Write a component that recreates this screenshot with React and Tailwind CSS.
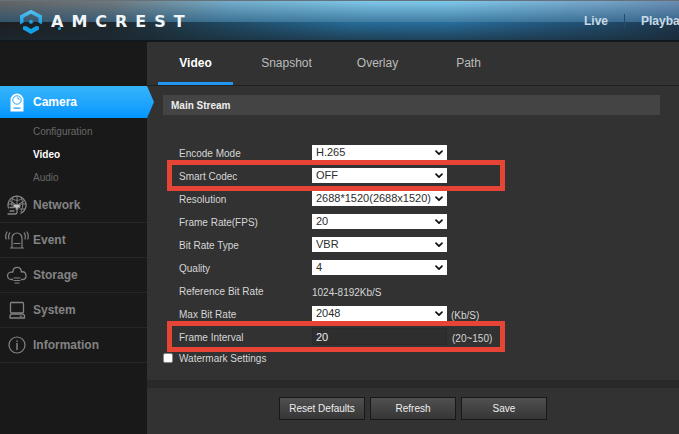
import React from "react";

const stroke = {
  fill: "none",
  stroke: "currentColor",
  strokeLinecap: "round",
  strokeLinejoin: "round",
};

function LogoMark() {
  return (
    <svg width="24" height="26" viewBox="0 0 24 26" aria-hidden="true">
      <defs>
        <linearGradient id="mark" x1="0" y1="0" x2="0" y2="1">
          <stop offset="0" stopColor="#5cc0ee" />
          <stop offset="1" stopColor="#12a0e6" />
        </linearGradient>
      </defs>
      <path d="M1 15.500V6.500L12 0.800L23 6.500V15.500L19.500 13.500V8.700L12 4.800L4.500 8.700V13.500Z" fill="url(#mark)" />
      <path d="M4 17.500L7 17L12 20L17 17L20 17.500V20.500L12 25L4 20.500Z" fill="#12a0e6" />
      <circle cx="12" cy="12.800" r="2" fill="#1ea6e8" />
    </svg>
  );
}

function CameraIcon() {
  return (
    <svg width="14" height="19" viewBox="0 0 14 19" aria-hidden="true">
      <path d="M0.500 18.500V7a6.500 6.500 0 0 1 13 0V18.500Z" fill="#fff" />
      <circle cx="7" cy="7" r="4.200" fill="none" stroke="#2aa9f8" strokeWidth="1" />
      <path d="M7 4.800a2.200 2.200 0 0 1 2.200 2.200" fill="none" stroke="#2aa9f8" strokeWidth="1" />
      <path d="M3.500 15.200h7" stroke="#1ba1fb" strokeWidth="1.200" />
    </svg>
  );
}

function NetworkIcon() {
  return (
    <svg width="20" height="20" viewBox="0 0 20 20" aria-hidden="true" {...stroke}>
      <path d="M1.500 13A9 9 0 1 1 14 18.200" strokeWidth="1.300" />
      <path d="M5 3.500C7 6 13 6 15.500 3.500M1.500 9h5M13 9h6M10 1v8M6 2.500C4.500 6 4.500 8 5 11M14 2.500c2.500 4 2.500 9 0 14M3 6l5 3M17 6l-5 3M13 14h5" />
      <path d="M7 9.500h6v3h-2v2H9v-2H7Z" fill="#c4c4c4" />
      <path d="M10 14v3c0 1.500-1 2-2 2H1M3 12.500h4M3 16h4" strokeWidth="1.300" />
    </svg>
  );
}

function EventIcon() {
  return (
    <svg width="24" height="18" viewBox="0 0 24 18" aria-hidden="true" {...stroke}>
      <path d="M7 16.500V7a5 5 0 0 1 10 0V16.500M5.500 17h13M9 12.500h6" strokeWidth="1.200" />
      <path d="M4.800 2Q3 4 4 8M2 1Q0 4 1.200 8M19.200 2Q21 4 20 8M22 1Q24 4 22.800 8" strokeWidth="1.200" />
    </svg>
  );
}

function StorageIcon() {
  return (
    <svg width="20" height="18" viewBox="0 0 20 18" aria-hidden="true" {...stroke}>
      <path d="M5.500 13.500H4.500a3.700 3.700 0 0 1-.5-7.400C6 6 6 6.500 6 5a4.200 4.200 0 0 1 8.300 0v1c3-1 4.700 1 4.700 3.700S17.500 13.500 15.500 13.500h-1" strokeWidth="1.300" />
      <path d="M7 12h6M7 14.500h6M8 17h4" strokeWidth="1.200" />
    </svg>
  );
}

function SystemIcon() {
  return (
    <svg width="18" height="18" viewBox="0 0 18 18" aria-hidden="true" {...stroke}>
      <rect x="2.500" y="1.500" width="13" height="10.500" rx="1" strokeWidth="1.300" />
      <path d="M3 13.200h12l1.500 1v2.800h-14.500V14.200Z" strokeWidth="1.300" />
      <path d="M12 15.200h2" />
    </svg>
  );
}

function InformationIcon() {
  return (
    <svg width="18" height="18" viewBox="0 0 18 18" aria-hidden="true" {...stroke}>
      <circle cx="9" cy="9" r="8" strokeWidth="1.200" />
      <path d="M9 7.500v6M9 5v0.200" strokeWidth="1.500" />
    </svg>
  );
}

const sections = [
  { name: "Network", icon: NetworkIcon },
  { name: "Event", icon: EventIcon },
  { name: "Storage", icon: StorageIcon },
  { name: "System", icon: SystemIcon },
  { name: "Information", icon: InformationIcon },
];

function Header() {
  return (
    <header className="relative flex h-[42px] shrink-0 items-center overflow-hidden border-t border-b-2 border-t-[#66727a] border-b-[#11181d] bg-[linear-gradient(to_right,#1d1f21_0px,#1f262b_110px,#204a64_230px,#266c99_350px,#286f9f_450px,#204d6e_600px,#1d354b_679px)]">
      <div className="absolute inset-x-0 top-0 h-[21px] bg-[linear-gradient(to_right,#646464_0px,#71787c_110px,#76aecb_230px,#80c8ea_370px,#80c9ec_450px,#76a5c8_600px,#6b8db1_679px)]" />
      <div className="absolute inset-x-0 top-0 h-[21px] bg-linear-to-b from-transparent to-[#144a70]/60" />
      <div className="absolute inset-x-0 bottom-0 h-[18px] bg-linear-to-b from-transparent to-[#1b2933]/65" />
      <div className="relative flex items-center gap-2 pt-[3px] pl-[19px]">
        <LogoMark />
        <span className="relative font-['DejaVu_Sans',sans-serif] text-base font-bold tracking-[8px] text-[#f2f6f8]">
          AMCREST
          <span className="absolute bottom-1 left-[7px] size-[3px] rounded-full bg-[#1ea6e8]" />
        </span>
      </div>
      <nav className="absolute left-[584px] flex items-center text-xs font-bold text-[#c9d9e6]">
        <a href="#live">Live</a>
        <span className="ml-4 h-[14px] w-px bg-[#244b68]" />
        <a href="#playback" className="ml-4">Playback</a>
      </nav>
    </header>
  );
}

function Sidebar() {
  return (
    <aside className="w-[147px] shrink-0 bg-[#191919] pt-[44px] font-bold text-[#838383]">
      <a href="#camera" className="relative flex h-8 w-[154px] items-center bg-linear-to-b from-[#35b5fa] to-[#0096ff] text-xs text-white [clip-path:polygon(0_0,147px_0,100%_50%,147px_100%,0_100%)]">
        <span className="flex w-[33px] justify-center"><CameraIcon /></span>
        Camera
      </a>
      <ul className="h-[70px] pt-[2px] pl-[33px] text-[10px] leading-[23px]">
        <li><a href="#configuration" className="font-normal text-[#686868]">Configuration</a></li>
        <li><a href="#video" className="text-white">Video</a></li>
        <li><a href="#audio" className="font-normal text-[#686868]">Audio</a></li>
      </ul>
      {sections.map(({ name, icon: Icon }) => (
        <a key={name} href={"#" + name} className="flex h-[35px] items-center border-b border-[#262626] text-xs">
          <span className="flex w-[33px] justify-center"><Icon /></span>
          {name}
        </a>
      ))}
    </aside>
  );
}

function Tabs() {
  return (
    <nav className="flex h-[44px] gap-4 border-b border-[#202020] pl-[11px] text-xs text-[#bcbcbc]">
      {["Video", "Snapshot", "Overlay", "Path"].map((tab, i) => (
        <a
          key={tab}
          href={"#tab-" + tab}
          className={
            i === 0
              ? "flex w-[75px] items-center justify-center border-b-3 border-[#2196f3] pt-[2px] font-bold text-white"
              : "flex w-[75px] items-center justify-center border-b-3 border-transparent pt-[2px]"
          }
        >
          {tab}
        </a>
      ))}
    </nav>
  );
}

function Row({ id, label, marked, children }) {
  return (
    <div className="relative flex h-[23px] items-center">
      <label htmlFor={id} className="w-[133px] shrink-0 pt-px">{label}</label>
      {children}
      {marked && (
        <span className="pointer-events-none absolute -top-1 -left-3 h-[31px] w-[338px] border-5 border-[#e64434]" />
      )}
    </div>
  );
}

function Select({ id, label, value, unit, marked }) {
  return (
    <Row id={id} label={label} marked={marked}>
      <div className="relative">
        <select id={id} className="block h-[15px] w-[135px] appearance-none bg-white pl-1 text-[11px] leading-[15px] text-[#2c2c2c]">
          <option>{value}</option>
        </select>
        <svg className="pointer-events-none absolute top-[5px] right-1 text-[#111]" width="8" height="6" viewBox="0 0 8 6" aria-hidden="true" {...stroke}>
          <path d="M1 1.200L4 4.200L7 1.200" strokeWidth="1.700" />
        </svg>
      </div>
      {unit && <span className="pt-[3px] pl-1">{unit}</span>}
    </Row>
  );
}

function Settings() {
  return (
    <form className="pt-[9px] pr-[19px] pb-3 pl-4">
      <h2 className="flex h-5 items-center bg-[#444] pl-2 text-[10px] font-bold text-[#eee]">Main Stream</h2>
      <div className="pt-[26px] pl-4 text-[10px] text-[#d6d6d6]">
        <Select id="encode" label="Encode Mode" value="H.265" />
        <Select id="codec" label="Smart Codec" value="OFF" marked />
        <Select id="resolution" label="Resolution" value="2688*1520(2688x1520)" />
        <Select id="fps" label="Frame Rate(FPS)" value="20" />
        <Select id="type" label="Bit Rate Type" value="VBR" />
        <Select id="quality" label="Quality" value="4" />
        <Row id="reference" label="Reference Bit Rate">
          <output id="reference" className="pt-[3px]">1024-8192Kb/S</output>
        </Row>
        <Select id="max" label="Max Bit Rate" value="2048" unit="(Kb/S)" />
        <Row id="interval" label="Frame Interval" marked>
          <input id="interval" type="text" defaultValue="20" className="h-[17px] w-[135px] border border-[#2a2a2a] bg-[#2e2e2e] pl-[3px] text-[11px] text-[#eee]" />
          <span className="pt-[3px] pl-[5px]">(20~150)</span>
        </Row>
      </div>
      <div className="flex h-5 items-center gap-[6px] text-[10px] text-[#d6d6d6]">
        <input id="watermark" type="checkbox" className="size-[10px] appearance-none rounded-xs border border-[#888] bg-white checked:bg-[#2196f3]" />
        <label htmlFor="watermark">Watermark Settings</label>
      </div>
    </form>
  );
}

function Actions() {
  return (
    <div className="flex justify-center gap-[5px] border-t-8 border-[#292929] pt-[9px]">
      {["Reset Defaults", "Refresh", "Save"].map((name) => (
        <button
          key={name}
          type="button"
          className="h-[23px] w-[86px] border border-[#181818] bg-linear-to-b from-[#505050] to-[#363636] text-[10px] text-[#eee]"
        >
          {name}
        </button>
      ))}
    </div>
  );
}

export default function App() {
  return (
    <div className="flex min-h-screen flex-col overflow-hidden bg-[#323232] font-['Liberation_Sans',Arial,sans-serif]">
      <Header />
      <div className="flex grow">
        <Sidebar />
        <main className="min-w-0 grow">
          <Tabs />
          <Settings />
          <Actions />
        </main>
      </div>
    </div>
  );
}
